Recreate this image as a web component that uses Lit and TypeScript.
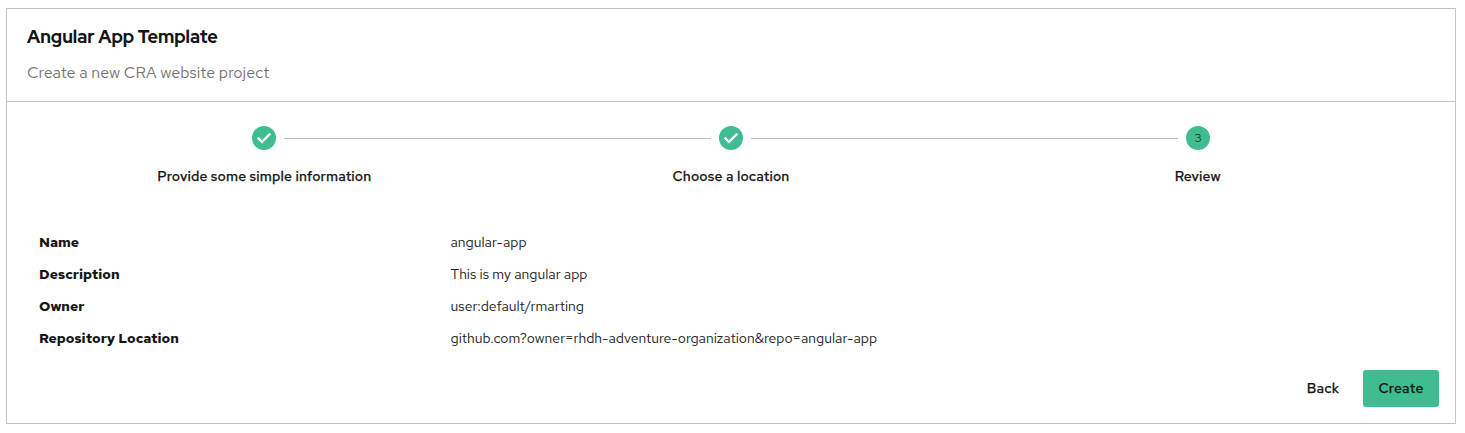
import { LitElement, html, css } from "lit";
import { customElement } from "lit/decorators.js";

const steps = [
  { label: "Provide some simple information", done: true },
  { label: "Choose a location", done: true },
  { label: "Review", done: false },
];

const rows = [
  { key: "Name", value: "angular-app" },
  { key: "Description", value: "This is my angular app" },
  { key: "Owner", value: "user:default/rmarting" },
  { key: "Repository Location", value: "github.com?owner=rhdh-adventure-organization&repo=angular-app" },
];

@customElement("app-root")
export class AppRoot extends LitElement {
  static styles = css`
    :host {
      display: block;
      box-sizing: border-box;
      height: 433px;
      padding: 8px 9px 9px 6px;
      background: #fff;
      color: #151515;
      font-family: "Red Hat Text", Inter, sans-serif;
      font-size: 14px;
    }
    * { box-sizing: border-box; }
    .card {
      height: 416px;
      border: 1px solid #c4c4c4;
      display: flex;
      flex-direction: column;
    }
    .header {
      height: 93px;
      padding: 16px 20px 0;
      border-bottom: 1px solid #c4c4c4;
    }
    .title {
      margin: 0;
      font-family: "Red Hat Display", "Red Hat Text", Inter, sans-serif;
      font-size: 18px;
      line-height: 24px;
      font-weight: 800;
    }
    .subtitle {
      margin: 12px 0 0;
      font-size: 16px;
      line-height: 24px;
      color: #757575;
    }
    .stepper {
      display: grid;
      grid-template-columns: repeat(3, 1fr);
      padding: 24px 24px 0;
      height: 124px;
    }
    .step {
      display: flex;
      flex-direction: column;
      gap: 16px;
    }
    .track {
      display: grid;
      grid-template-columns: 1fr 24px 1fr;
      column-gap: 8px;
      align-items: center;
    }
    .line { height: 1px; background: #bdbdbd; margin-top: 1px; }
    .blank { background: none; }
    .badge { display: block; width: 24px; height: 24px; }
    .dot { fill: #3fbd8e; }
    .num { font-size: 12px; fill: #151515; fill-opacity: 0.87; text-anchor: middle; }
    .label {
      text-align: center;
      line-height: 20px;
      font-weight: 500;
      letter-spacing: 0.01071em;
      -webkit-text-stroke: 0.25px currentColor;
      white-space: nowrap;
    }
    .review { margin: 0; padding: 0 32px; }
    .row {
      display: grid;
      grid-template-columns: 411.5px 1fr;
      height: 32px;
      line-height: 32px;
      white-space: nowrap;
    }
    .key { font-weight: 700; }
    .value { margin: 0; color: #222; }
    .actions {
      display: flex;
      justify-content: flex-end;
      gap: 8px;
      margin: 16px 16px 0;
    }
    .btn {
      width: 64px;
      height: 37px;
      border: 0;
      border-radius: 3px;
      padding: 0 0 1px;
      background: none;
      color: #151515;
      font: inherit;
      font-weight: 500;
      letter-spacing: 0.02em;
      -webkit-text-stroke: 0.25px currentColor;
    }
    .primary { width: 76px; background: #3fbd8e; }
  `;

  render() {
    return html`
      <section class="card">
        <header class="header">
          <h1 class="title">Angular App Template</h1>
          <p class="subtitle">Create a new CRA website project</p>
        </header>
        <div class="stepper">
          ${steps.map(
            (s, i) => html`
              <div class="step">
                <div class="track">
                  <span class="line ${i === 0 ? "blank" : ""}"></span>
                  <svg class="badge" viewBox="0 0 24 24">
                    <circle class="dot" cx="12" cy="12" r="12" />
                    ${s.done
                      ? html`<svg viewBox="0 0 24 24"><path fill="none" stroke="#fff" stroke-width="2.2" d="M5.7 11.6 L10 15.9 L18.3 7.6" /></svg>`
                      : html`<svg viewBox="0 0 24 24"><text class="num" x="12" y="16.3">${i + 1}</text></svg>`}
                  </svg>
                  <span class="line ${i === steps.length - 1 ? "blank" : ""}"></span>
                </div>
                <div class="label">${s.label}</div>
              </div>
            `
          )}
        </div>
        <dl class="review">
          ${rows.map(
            (r) => html`<div class="row"><dt class="key">${r.key}</dt><dd class="value">${r.value}</dd></div>`
          )}
        </dl>
        <div class="actions">
          <button class="btn">Back</button>
          <button class="btn primary">Create</button>
        </div>
      </section>
    `;
  }
}
